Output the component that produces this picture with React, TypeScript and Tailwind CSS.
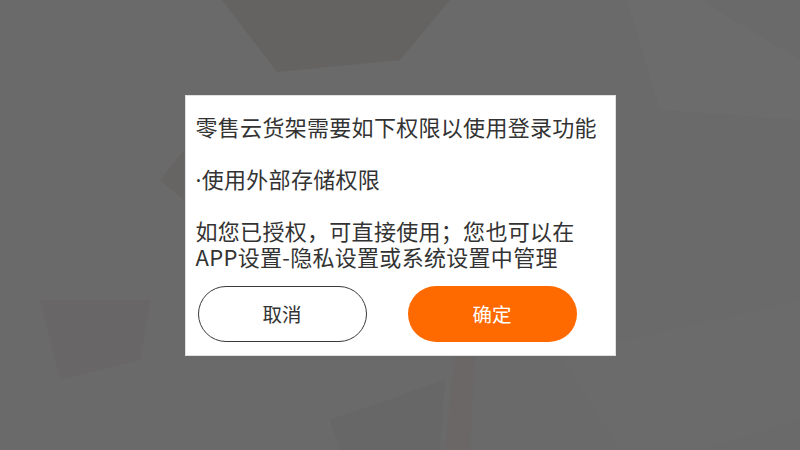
import React from 'react';

const Backdrop: React.FC = () => (
  <svg className="absolute inset-0 h-full w-full" viewBox="0 0 800 450" preserveAspectRatio="none">
    <rect width="800" height="450" fill="#6a6a6a" />
    <polygon points="222,0 450,0 400,60 277,72" fill="#656262" />
    <polygon points="160,180 184,150 184,200" fill="#676464" />
    <polygon points="0,270 120,285 160,300 150,380 60,400 0,360" fill="#6b6a6a" />
    <polygon points="40,300 150,300 140,360 60,380" fill="#686666" />
    <polygon points="455,355 475,355 470,450 445,450" fill="#6b6767" />
    <polygon points="560,355 800,300 800,420 700,450 620,450" fill="#6b6b6b" />
    <polygon points="627,0 700,0 800,60 800,120 660,110" fill="#6c6c6c" />
    <polygon points="330,420 445,380 440,450 340,450" fill="#686767" />
  </svg>
);

const App: React.FC = () => {
  return (
    <div
      className="relative flex h-[450px] w-[800px] items-center justify-center overflow-hidden"
      style={{ fontFamily: '"Noto Sans CJK SC", "Noto Sans", sans-serif' }}
    >
      <Backdrop />

      {/* Permission dialog */}
      <div className="relative flex h-[261px] w-[431px] flex-col border border-[#e0e0e0] bg-white">
        <div className="pl-[10px] pt-[17px] text-[22px] leading-[26px] tracking-[0.3px] text-[#333333]">
          <div className="h-[26px] whitespace-nowrap">零售云货架需要如下权限以使用登录功能</div>
          <div className="h-[26px]" />
          <div className="h-[26px] whitespace-nowrap">
            <span style={{ fontFamily: '"Noto Sans", sans-serif' }}>·</span>使用外部存储权限
          </div>
          <div className="h-[26px]" />
          <div className="h-[26px] whitespace-nowrap">如您已授权，可直接使用；您也可以在</div>
          <div className="h-[26px] whitespace-nowrap">APP设置-隐私设置或系统设置中管理</div>
        </div>

        <div className="mt-[17px] flex gap-[41px] pl-[12px]">
          <button className="flex h-[56px] w-[169px] items-center justify-center rounded-full border-[1.5px] border-[#3a3a3a] bg-white text-[19.5px] text-[#333333]">
            取消
          </button>
          <button className="flex h-[56px] w-[169px] items-center justify-center rounded-full bg-[#ff6a00] text-[19.5px] text-white">
            确定
          </button>
        </div>
      </div>
    </div>
  );
};

export default App;
